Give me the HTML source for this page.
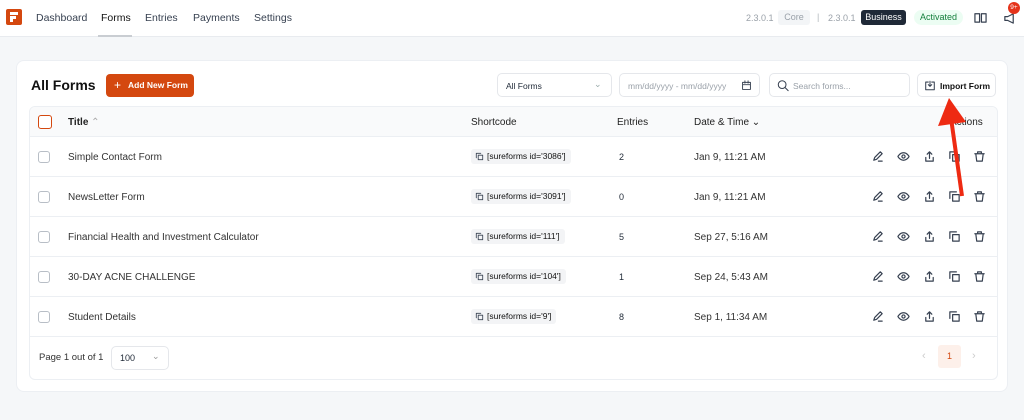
<!DOCTYPE html>
<html><head><style>
*{box-sizing:border-box;margin:0;padding:0}
body{width:1024px;height:420px;background:#f5f7f9;font-family:"Liberation Sans",sans-serif;color:#1f2937;position:relative;overflow:hidden;font-size:10px}
.a{position:absolute}
.hdr{left:0;top:0;width:1024px;height:37px;background:#fff;border-bottom:1px solid #e8ebef}
.nav{top:12px;font-size:10.5px;color:#374151}
.card{left:16px;top:60px;width:992px;height:332px;background:#fff;border-radius:8px;border:1px solid #eceff3}
.tbl{left:29px;top:106px;width:969px;height:274px;border:1px solid #eceff3;border-radius:6px;overflow:hidden}
.th{left:0;top:0;width:100%;height:30px;background:#f9fafb;border-bottom:1px solid #eceff3}
.row{left:0;width:100%;height:40px;border-bottom:1px solid #eceff3}
.cb{width:12px;height:12px;border:1px solid #b8bec6;border-radius:3px;background:#fff}
.sc{background:#f3f4f6;border-radius:3px;height:15px;padding:0 5px 0 16px;font-size:8.5px;line-height:15px;color:#111}
.in{background:#fff;border:1px solid #e5e7eb;border-radius:5px;height:24px}
svg.i{position:absolute;width:13px;height:13px;fill:none;stroke:#374151;stroke-width:1.3;stroke-linecap:round;stroke-linejoin:round}
</style></head><body>
<div class="a hdr"></div>
<div class="a" style="left:6px;top:9px;width:16px;height:16px;background:#d4480f;border-radius:2px"></div>
<div class="a" style="left:10px;top:12px;width:8px;height:3px;background:#fff"></div>
<div class="a" style="left:10px;top:16px;width:6px;height:2.5px;background:#fff"></div>
<div class="a" style="left:10px;top:19px;width:3px;height:3px;background:#fff"></div>
<div class="a nav" style="left:36px">Dashboard</div>
<div class="a nav" style="left:101px;color:#111">Forms</div>
<div class="a" style="left:98px;top:35px;width:34px;height:2px;background:#c9cdd2"></div>
<div class="a nav" style="left:145px">Entries</div>
<div class="a nav" style="left:193px">Payments</div>
<div class="a nav" style="left:254px">Settings</div>
<div class="a" style="left:746px;top:13px;font-size:9px;color:#9aa1a9">2.3.0.1</div>
<div class="a" style="left:778px;top:10px;width:32px;height:15px;background:#f3f5f7;border-radius:3px;font-size:9px;color:#9aa1a9;text-align:center;line-height:15px">Core</div>
<div class="a" style="left:817px;top:12px;font-size:9px;color:#b0b5bb">|</div>
<div class="a" style="left:828px;top:13px;font-size:9px;color:#9aa1a9">2.3.0.1</div>
<div class="a" style="left:861px;top:10px;width:45px;height:15px;background:#1f2937;border-radius:3px;font-size:9px;color:#fff;text-align:center;line-height:15px">Business</div>
<div class="a" style="left:914px;top:10px;width:49px;height:15px;background:#ecfdf3;border-radius:8px;font-size:9px;color:#15803d;text-align:center;line-height:15px">Activated</div>
<svg class="i" style="left:974px;top:11px" viewBox="0 0 14 14"><path d="M1 3h5v9H1zM8 3h5v9H8z"/></svg>
<svg class="i" style="left:1003px;top:12px" viewBox="0 0 14 14"><path d="M2 5v4h3l6 3V2L5 5z"/></svg>
<div class="a" style="left:1008px;top:2px;width:12px;height:12px;border-radius:6px;background:#e5341b;color:#fff;font-size:6.5px;text-align:center;line-height:12px">9+</div>

<div class="a card"></div>
<div class="a" style="left:31px;top:77px;font-size:14px;font-weight:bold;color:#111">All Forms</div>
<div class="a" style="left:106px;top:74px;width:88px;height:23px;background:#d4480f;border-radius:4px;color:#fff;font-size:8.5px;font-weight:bold;line-height:23px;padding-left:22px">Add New Form</div>
<div class="a" style="left:114px;top:78px;color:#fff;font-size:12px">+</div>
<div class="a in" style="left:497px;top:73px;width:115px"><span class="a" style="left:8px;top:7px;font-size:8.5px">All Forms</span><span class="a" style="left:96px;top:5px;color:#9aa;font-size:9px">⌄</span></div>
<div class="a in" style="left:619px;top:73px;width:141px"><span class="a" style="left:8px;top:7px;font-size:8.5px;color:#9aa1a9">mm/dd/yyyy - mm/dd/yyyy</span><svg class="i" style="left:121px;top:5px;width:11px;stroke-width:1.2" viewBox="0 0 14 14"><path d="M2 3h10v9H2zM2 6h10M5 1v3M9 1v3"/></svg></div>
<div class="a in" style="left:769px;top:73px;width:141px"><svg class="i" style="left:7px;top:5px;width:12px;stroke-width:1.2" viewBox="0 0 14 14"><circle cx="6" cy="6" r="4.5"/><path d="M9.5 9.5L13 13"/></svg><span class="a" style="left:23px;top:7px;font-size:8.5px;color:#9aa1a9">Search forms...</span></div>
<div class="a in" style="left:917px;top:73px;width:79px"><svg class="i" style="left:6px;top:5px;width:12px;stroke-width:1.2" viewBox="0 0 14 14"><path d="M2 3h3M9 3h3v9H2V3M7 2v6M5 6l2 2 2-2"/></svg><span class="a" style="left:22px;top:7px;font-size:8.5px;font-weight:bold;color:#111">Import Form</span></div>

<div class="a tbl">
<div class="a th"></div>
<div class="a" style="left:8px;top:8px;width:14px;height:14px;border:1.5px solid #d4480f;border-radius:3px;background:#fff"></div>
<div class="a" style="left:38px;top:10px;font-size:10px;font-weight:bold;color:#222">Title <span style="color:#aaa;font-weight:normal">⌃</span></div>
<div class="a" style="left:441px;top:10px;font-size:10px;color:#222">Shortcode</div>
<div class="a" style="left:587px;top:10px;font-size:10px;color:#222">Entries</div>
<div class="a" style="left:664px;top:10px;font-size:10px;color:#222">Date &amp; Time ⌄</div>
<div class="a" style="left:920px;top:10px;font-size:10px;color:#222">Actions</div>
</div>
<div class="a" style="left:29px;top:137px;width:969px">
<div id="rows"></div>
</div>
<script>
var d=[["Simple Contact Form","3086","2","Jan 9, 11:21 AM"],["NewsLetter Form","3091","0","Jan 9, 11:21 AM"],["Financial Health and Investment Calculator","111","5","Sep 27, 5:16 AM"],["30-DAY ACNE CHALLENGE","104","1","Sep 24, 5:43 AM"],["Student Details","9","8","Sep 1, 11:34 AM"]];
var h="";
var ic=['<path d="M3 11l1-3 6-6 2 2-6 6-3 1zM8 12h4"/>','<path d="M1 7s2-4 6-4 6 4 6 4-2 4-6 4-6-4-6-4z"/><circle cx="7" cy="7" r="1.7"/>','<path d="M7 9V2M4.5 4.5L7 2l2.5 2.5M3 8v4h8V8"/>','<path d="M5 5h7v7H5zM2 9V2h7"/>','<path d="M2 4h10M5 4V2h4v2M3 4l1 8h6l1-8"/>'];
d.forEach(function(r,i){var t=i*40;
h+='<div class="a row" style="top:'+t+'px"></div><div class="a cb" style="left:9px;top:'+(t+14)+'px"></div>';
h+='<div class="a" style="left:39px;top:'+(t+15)+'px;font-size:10px;color:#333">'+r[0]+'</div>';
h+='<div class="a sc" style="left:442px;top:'+(t+12)+'px">[sureforms id=\''+r[1]+'\']</div><svg class="i" style="left:446px;top:'+(t+15)+'px;width:9px;height:9px;stroke-width:1.3" viewBox="0 0 14 14">'+ic[3]+'</svg>';
h+='<div class="a" style="left:590px;top:'+(t+15)+'px;font-size:9px">'+r[2]+'</div>';
h+='<div class="a" style="left:665px;top:'+(t+15)+'px;font-size:10px;color:#333">'+r[3]+'</div>';
[842,868,894,919,944].forEach(function(x,k){h+='<svg class="i" style="left:'+x+'px;top:'+(t+13)+'px" viewBox="0 0 14 14">'+ic[k]+'</svg>';});
});
document.getElementById('rows').innerHTML=h;
</script>
<div class="a" style="left:39px;top:352px;font-size:9.5px;color:#333">Page 1 out of 1</div>
<div class="a in" style="left:111px;top:346px;width:58px"><span class="a" style="left:8px;top:6px;font-size:9px">100</span><span class="a" style="left:40px;top:4px;color:#999;font-size:9px">⌄</span></div>
<div class="a" style="left:922px;top:350px;color:#ccc;font-size:11px">‹</div>
<div class="a" style="left:938px;top:345px;width:23px;height:23px;background:#fdf0ea;border-radius:3px;color:#d4480f;font-size:9px;text-align:center;line-height:23px">1</div>
<div class="a" style="left:972px;top:350px;color:#ccc;font-size:11px">›</div>
<svg class="a" style="left:0;top:0" width="1024" height="420"><path d="M962 196L951 118" stroke="#ee2a12" stroke-width="4"/><path d="M949 98L938 126L966 122z" fill="#ee2a12"/></svg>
</body></html>
